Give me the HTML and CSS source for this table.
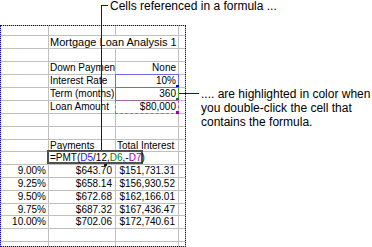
FILE: index.html
```html
<!DOCTYPE html>
<html>
<head>
<meta charset="utf-8">
<title>Cell references</title>
<link rel="stylesheet" href="styles.css">
</head>
<body>
<div class="page">
  <div class="top-note">Cells referenced in a formula ...</div>
  <div class="main">
    <div class="sheet">
      <div class="c"></div><div class="c"></div><div class="c"></div><div class="c"></div>

      <div class="c"></div><div class="c title span2">Mortgage Loan Analysis 1</div><div class="c"></div>

      <div class="c"></div><div class="c"></div><div class="c"></div><div class="c"></div>

      <div class="c"></div><div class="c">Down Paymen</div><div class="c r">None</div><div class="c"></div>

      <div class="c"></div><div class="c">Interest Rate</div><div class="c r ref ref-blue">10%</div><div class="c"></div>

      <div class="c"></div><div class="c">Term (months)</div><div class="c r ref ref-green">360</div><div class="c"></div>

      <div class="c"></div><div class="c">Loan Amount</div><div class="c r ref ref-pink">$80,000</div><div class="c"></div>

      <div class="c"></div><div class="c"></div><div class="c"></div><div class="c"></div>

      <div class="c"></div><div class="c"></div><div class="c"></div><div class="c"></div>

      <div class="c"></div><div class="c">Payments</div><div class="c">Total Interest</div><div class="c"></div>

      <div class="c"></div>
      <div class="c edit-host">
        <div class="editor">=PMT(<span class="k-blue">D5</span>/12,<span class="k-green">D6</span>,-<span class="k-pink">D7</span>)<span class="edit-mark"></span></div>
      </div>
      <div class="c"></div><div class="c"></div>

      <div class="c r pct">9.00%</div><div class="c r num">$643.70</div><div class="c r num">$151,731.31</div><div class="c"></div>
      <div class="c r pct">9.25%</div><div class="c r num">$658.14</div><div class="c r num">$156,930.52</div><div class="c"></div>
      <div class="c r pct">9.50%</div><div class="c r num">$672.68</div><div class="c r num">$162,166.01</div><div class="c"></div>
      <div class="c r pct">9.75%</div><div class="c r num">$687.32</div><div class="c r num">$167,436.47</div><div class="c"></div>
      <div class="c r pct">10.00%</div><div class="c r num">$702.06</div><div class="c r num">$172,740.61</div><div class="c"></div>

      <div class="c"></div><div class="c"></div><div class="c"></div><div class="c"></div>

      <div class="c"></div><div class="c"></div><div class="c"></div><div class="c"></div>
    </div>
    <p class="side-note">.... are highlighted in color when you double-click the cell that contains the formula.</p>
  </div>
  <span class="leader leader-stub"></span>
  <span class="leader leader-down"></span>
  <span class="leader leader-side"></span>
</div>
</body>
</html>
```

FILE: styles.css
```css
* {
  box-sizing: border-box;
}

html, body {
  margin: 0;
  padding: 0;
  background: #ffffff;
}

.page {
  position: relative;
  width: 372px;
  height: 247px;
  overflow: hidden;
  font-family: "Liberation Sans", Arial, sans-serif;
  color: #000000;
}

.top-note {
  height: 25px;
  padding-left: 110px;
  font-size: 12px;
  line-height: 12px;
  white-space: nowrap;
}

.main {
  display: flex;
  align-items: flex-start;
}

.sheet {
  flex: none;
  width: 186px;
  display: grid;
  grid-template-columns: 47px 66px 62px 6px;
  grid-template-rows: 9px 12px 12px 12px 12px 12px 12px 12px 12px 11px 12px 12px 12px 12px 11px 12px 12px 4px;
  gap: 1px;
  background: #c0c0c0;
  border: 1px dotted #0000c8;
  font-size: 10px;
}

.c {
  position: relative;
  background: #ffffff;
  padding: 0 1px;
  line-height: 12px;
  white-space: nowrap;
}

.span2 {
  grid-column: span 2;
}

.title {
  font-size: 11px;
}

.r {
  text-align: right;
  padding-right: 2px;
}

.pct {
  padding-right: 2px;
}

.num {
  padding-right: 3px;
}

.ref::after {
  content: "";
  position: absolute;
  right: -1px;
  bottom: -1px;
  width: 3px;
  height: 3px;
}

.ref-blue {
  outline: 1px solid #6a6aee;
}

.ref-blue::after {
  background: #0000ff;
}

.ref-green {
  outline: 1px solid #40a040;
}

.ref-green::after {
  background: #008000;
}

.ref-pink {
  outline: 1px dashed #d050d0;
}

.ref-pink::after {
  background: #a000a0;
}

.editor {
  position: absolute;
  left: -2px;
  top: -2px;
  width: 96px;
  height: 14px;
  border: 2px solid #505050;
  background: #ffffff;
  padding-left: 1px;
  line-height: 11px;
  z-index: 1;
}

.edit-mark {
  position: absolute;
  left: 55px;
  top: 12px;
  width: 3px;
  height: 2px;
  background: #202020;
}

.k-blue {
  color: #2020ff;
}

.k-green {
  color: #008000;
}

.k-pink {
  color: #a000a0;
}

.side-note {
  margin: 62px 0 0 15px;
  width: 171px;
  font-size: 12px;
  line-height: 14px;
}

.leader {
  position: absolute;
  background: #0000ff;
  z-index: 2;
}

.leader-stub {
  left: 101px;
  top: 5px;
  width: 7px;
  height: 1px;
}

.leader-down {
  left: 101px;
  top: 5px;
  width: 1px;
  height: 145px;
}

.leader-side {
  left: 179px;
  top: 93px;
  width: 20px;
  height: 1px;
}
```
